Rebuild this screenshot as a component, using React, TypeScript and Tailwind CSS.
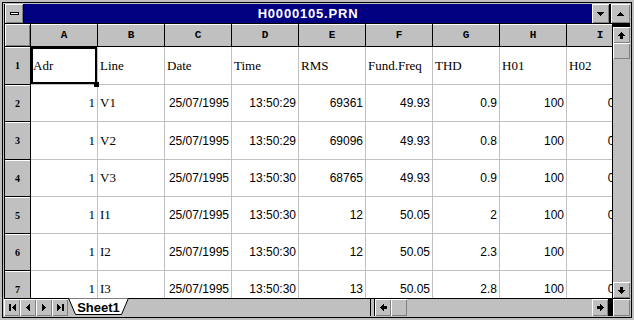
import React from "react";

const bevel =
  "bg-[#c0c0c0] shadow-[inset_1px_1px_0_#ffffff,inset_-1px_-1px_0_#808080]";

function Pix({ w, h, rects }: { w: number; h: number; rects: [number, number, number, number][] }) {
  return (
    <svg width={w} height={h} viewBox={`0 0 ${w} ${h}`} shapeRendering="crispEdges">
      {rects.map((r, i) => (
        <rect key={i} x={r[0]} y={r[1]} width={r[2]} height={r[3]} fill="#000" />
      ))}
    </svg>
  );
}

const triDown: [number, number, number, number][] = [0, 1, 2, 3].map((i) => [i, i, 7 - 2 * i, 1]);
const triUp: [number, number, number, number][] = [0, 1, 2, 3].map((i) => [3 - i, i, 2 * i + 1, 1]);
const arrowUp: [number, number, number, number][] = [
  ...[0, 1, 2, 3].map((i) => [3 - i, i, 2 * i + 1, 1] as [number, number, number, number]),
  [2, 4, 3, 3],
];
const arrowDown: [number, number, number, number][] = [
  [2, 0, 3, 3],
  ...[0, 1, 2, 3].map((i) => [i, 3 + i, 7 - 2 * i, 1] as [number, number, number, number]),
];
const arrowLeft: [number, number, number, number][] = [
  ...[0, 1, 2, 3].map((i) => [i, 3 - i, 1, 2 * i + 1] as [number, number, number, number]),
  [4, 2, 3, 3],
];
const arrowRight: [number, number, number, number][] = [
  [0, 2, 3, 3],
  ...[0, 1, 2, 3].map((i) => [3 + i, i, 1, 7 - 2 * i] as [number, number, number, number]),
];
const triLeft: [number, number, number, number][] = [0, 1, 2, 3].map((i) => [i, 3 - i, 1, 2 * i + 1]);
const triRight: [number, number, number, number][] = [0, 1, 2, 3].map((i) => [i, i, 1, 7 - 2 * i]);

const cols = ["A", "B", "C", "D", "E", "F", "G", "H", "I"];
const header = ["Adr", "Line", "Date", "Time", "RMS", "Fund.Freq", "THD", "H01", "H02"];
const data: string[][] = [
  ["1", "V1", "25/07/1995", "13:50:29", "69361", "49.93", "0.9", "100", "0.34"],
  ["1", "V2", "25/07/1995", "13:50:29", "69096", "49.93", "0.8", "100", "0.31"],
  ["1", "V3", "25/07/1995", "13:50:30", "68765", "49.93", "0.9", "100", "0.36"],
  ["1", "I1", "25/07/1995", "13:50:30", "12", "50.05", "2", "100", "0.42"],
  ["1", "I2", "25/07/1995", "13:50:30", "12", "50.05", "2.3", "100", "0.5"],
  ["1", "I3", "25/07/1995", "13:50:30", "13", "50.05", "2.8", "100", "0.47"],
];
const rowHeights = [38, 37, 38, 37, 37, 37, 37];

const serif = "font-['Liberation_Serif',serif] text-[13px]";
const sans = "font-['Liberation_Sans',Arial,sans-serif] text-[12px]";

function Cell({ text, col, row }: { text: string; col: number; row: number }) {
  const isHeader = row === 0;
  const left = isHeader || col === 1;
  const font = isHeader || col <= 1 ? serif : sans;
  return (
    <div
      className={`relative w-[67px] shrink-0 h-full border-r border-[#c0c0c0] flex items-center px-[2px] whitespace-nowrap text-black ${
        left ? "justify-start" : "justify-end"
      } ${font}`}
    >
      {text}
      {row === 0 && col === 0 && (
        <>
          <div className="absolute inset-0 border-2 border-black" />
          <div className="absolute right-[-2px] bottom-[-3px] w-[5px] h-[5px] bg-black z-10" />
        </>
      )}
    </div>
  );
}

export default function App() {
  const rows = [header, ...data, ["", "", "", "", "", "", "", "", ""]];
  return (
    <div className="w-[634px] h-[320px] bg-[#c0c0c0] p-[2px] overflow-hidden">
      <div className="w-full h-full border border-black p-[1px] flex flex-col">
        {/* Title bar */}
        <div className="h-[19px] flex shrink-0">
          <div className={`w-[19px] h-full ${bevel} border-l border-black flex items-center justify-center`}>
            <div className="w-[9px] h-[3px] bg-white border border-black" />
          </div>
          <div className="w-[1px] h-full bg-black" />
          <div className="flex-1 h-full bg-[#000080] flex items-center justify-center text-white font-bold text-[13px] tracking-[0.8px] font-['Liberation_Sans',Arial,sans-serif]">
            H0000105.PRN
          </div>
          <div className={`w-[17px] h-full ${bevel} flex items-center justify-center`}>
            <Pix w={7} h={4} rects={triDown} />
          </div>
          <div className="w-[2px] h-full bg-black" />
          <div className={`w-[19px] h-full ${bevel} flex items-center justify-center`}>
            <Pix w={7} h={4} rects={triUp} />
          </div>
        </div>

        {/* Middle */}
        <div className="flex h-[275px] shrink-0">
          <div className="w-[608px] h-full flex flex-col overflow-hidden border-l border-black">
            {/* column header */}
            <div className="h-[24px] shrink-0 flex border-t border-b border-black bg-[#c0c0c0]">
              <div className={`w-[26px] shrink-0 h-full ${bevel} border-r border-black`} />
              {cols.map((c) => (
                <div
                  key={c}
                  className="w-[67px] shrink-0 h-full border-r border-black flex items-center justify-center font-['Liberation_Mono',monospace] font-bold text-[11px] text-black shadow-[inset_0_1px_0_#ffffff]"
                >
                  {c}
                </div>
              ))}
            </div>
            {/* rows */}
            <div className="flex-1 bg-white">
              {rows.map((r, ri) => (
                <div
                  key={ri}
                  className="flex border-b border-[#c0c0c0]"
                  style={{ height: rowHeights[ri] }}
                >
                  <div className="w-[26px] shrink-0 h-[calc(100%+1px)] bg-[#c0c0c0] border-r border-b border-black shadow-[inset_0_1px_0_#ffffff] flex items-center justify-center font-['Liberation_Serif',serif] font-bold text-[10px] text-black">
                    {ri + 1}
                  </div>
                  {r.map((t, ci) => (
                    <Cell key={ci} text={t} col={ci} row={ri} />
                  ))}
                </div>
              ))}
            </div>
          </div>
          {/* vertical scrollbar */}
          <div className="w-[18px] h-full border-l border-black flex flex-col bg-[#c0c0c0]">
            <div className="h-[4px] bg-black shrink-0" />
            <div className={`h-[16px] shrink-0 ${bevel} flex items-center justify-center`}>
              <Pix w={7} h={7} rects={arrowUp} />
            </div>
            <div className={`h-[16px] shrink-0 ${bevel}`} />
            <div className="flex-1 bg-[#c0c0c0]" />
            <div className={`h-[16px] shrink-0 ${bevel} flex items-center justify-center`}>
              <Pix w={7} h={7} rects={arrowDown} />
            </div>
          </div>
        </div>

        {/* Tab bar */}
        <div className="h-[18px] shrink-0 border-t border-black flex bg-[#c0c0c0]">
          <div className="w-[366px] h-full flex">
            {[
              <div className="flex items-center gap-[1px]" key="a">
                <div className="w-[2px] h-[7px] bg-black" />
                <Pix w={4} h={7} rects={triLeft} />
              </div>,
              <Pix key="b" w={4} h={7} rects={triLeft} />,
              <Pix key="c" w={4} h={7} rects={triRight} />,
              <div className="flex items-center gap-[1px]" key="d">
                <Pix w={4} h={7} rects={triRight} />
                <div className="w-[2px] h-[7px] bg-black" />
              </div>,
            ].map((ic, i) => (
              <div key={i} className={`w-[16px] h-full ${bevel} flex items-center justify-center`}>
                {ic}
              </div>
            ))}
            <div className="relative w-[62px] h-full">
              <svg className="absolute left-0 top-[-1px]" width="62" height="18" viewBox="0 0 62 18">
                <polygon points="0.5,0 7.5,16.5 53.5,16.5 60.5,0" fill="#fff" stroke="#000" strokeWidth="1" />
              </svg>
              <div className="absolute left-[7px] w-[47px] top-0 h-full flex items-center justify-center font-['Liberation_Sans',Arial,sans-serif] font-bold text-[13px] text-black">
                Sheet1
              </div>
            </div>
          </div>
          <div className="flex-1 h-full flex">
            <div className="w-[5px] h-full border-x border-black" />
            <div className={`w-[16px] h-full ${bevel} flex items-center justify-center`}>
              <Pix w={7} h={7} rects={arrowLeft} />
            </div>
            <div className={`w-[16px] h-full ${bevel}`} />
            <div className="flex-1 h-full bg-[#c0c0c0]" />
            <div className={`w-[16px] h-full ${bevel} flex items-center justify-center`}>
              <Pix w={7} h={7} rects={arrowRight} />
            </div>
            <div className="w-[5px] h-full bg-black" />
          </div>
          <div className={`w-[17px] h-full ${bevel}`} />
        </div>
      </div>
    </div>
  );
}
